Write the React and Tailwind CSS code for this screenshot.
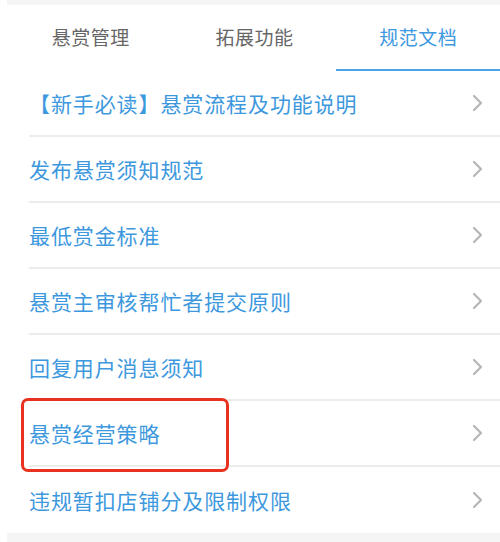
import React, { useState } from "react";

const tabs = ["悬赏管理", "拓展功能", "规范文档"];

const docs = [
  "【新手必读】悬赏流程及功能说明",
  "发布悬赏须知规范",
  "最低赏金标准",
  "悬赏主审核帮忙者提交原则",
  "回复用户消息须知",
  "悬赏经营策略",
  "违规暂扣店铺分及限制权限",
];

const Chevron = () => (
  <svg width="12" height="18" viewBox="0 0 12 18" fill="none">
    <path d="M3 2l7 7-7 7" stroke="#b6b6b6" strokeWidth="2.2" strokeLinecap="round" strokeLinejoin="round" />
  </svg>
);

const App = () => {
  const [active, setActive] = useState(2);

  return (
    <div
      className="relative w-[500px] h-[542px] bg-white overflow-hidden"
      style={{ fontFamily: '"Noto Sans CJK SC", "Noto Sans", sans-serif' }}
    >
      <div className="ml-[7px] h-[5px] bg-[#f5f5f5]" />

      {/* tabs */}
      <div className="flex pl-[9px] h-[66px]">
        {tabs.map((t, i) => (
          <div
            key={t}
            onClick={() => setActive(i)}
            className={`flex-1 flex items-center justify-center text-[19px] tracking-[0.5px] cursor-pointer border-b-2 ${
              active === i ? "text-[#3d98de] border-[#4aa3e6]" : "text-[#666666] border-transparent"
            }`}
          >
            {t}
          </div>
        ))}
      </div>

      {/* doc list */}
      <div className="ml-[29px]">
        {docs.map((d, i) => (
          <div
            key={d}
            className={`flex items-center justify-between h-[66px] pr-[17px] ${
              i < docs.length - 1 ? "border-b-2 border-[#ececec]" : ""
            }`}
          >
            <span className="text-[21px] text-[#3d98de] leading-none tracking-[0.9px]">{d}</span>
            <Chevron />
          </div>
        ))}
      </div>

      <div className="ml-[7px] h-[20px] bg-[#f5f5f5]" />

      {/* annotation box */}
      <div className="absolute left-[21px] top-[398px] w-[208px] h-[74px] border-[3px] border-[#e8321f] rounded-[7px]" />
    </div>
  );
};

export default App;
